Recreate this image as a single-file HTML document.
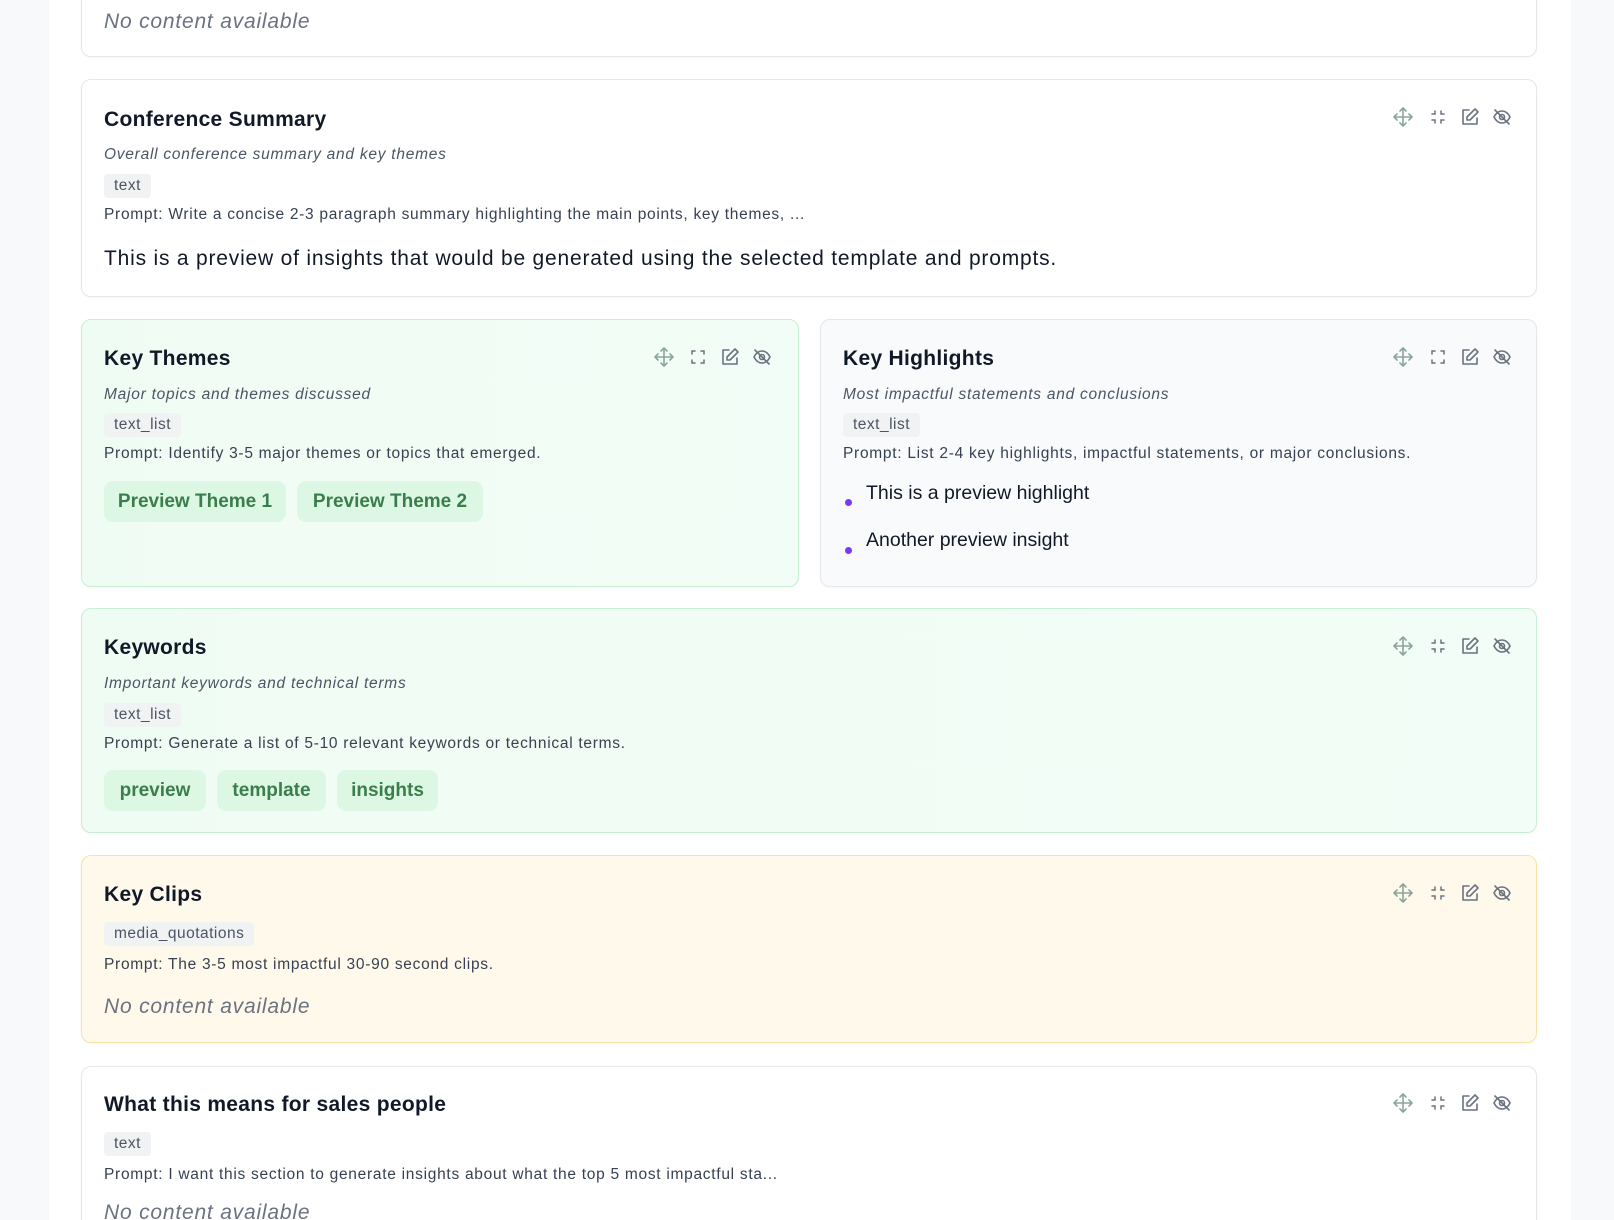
<!DOCTYPE html>
<html><head><meta charset="utf-8"><style>
*{margin:0;padding:0;box-sizing:border-box}
html,body{width:1614px;height:1220px;overflow:hidden}
body{background:#f8f9fb;font-family:"Liberation Sans",Arial,sans-serif;position:relative}
#w{position:absolute;left:0;top:0;width:1614px;height:1220px;overflow:hidden}
.main{position:absolute;left:49px;top:0;width:1522px;height:1220px;background:#fff}
.card{position:absolute;border:1px solid #e5e7eb;border-radius:10px;background:#fff;box-shadow:0 1px 2px rgba(0,0,0,.04)}
.g{background:linear-gradient(90deg,#effcf3,#f3fdf7);border-color:#c6efd4}
.s{background:#f8fafc}
.y{background:#fff9ec;border-color:#f8e3a6}
.t{position:absolute;white-space:nowrap;line-height:24px}
.h,.sub,.pr,.pv,.nc,.tag{transform:translateY(2px)}
.h{font-size:21px;font-weight:bold;color:#111827;letter-spacing:0.3px}
.sub{font-size:15.5px;font-style:italic;color:#4b5563;letter-spacing:0.75px}
.tag{position:absolute;height:24px;line-height:24px;padding:0 10px;background:#f1f2f4;border-radius:4px;font-size:15.5px;color:#4b5563;letter-spacing:0.5px}
.pr{font-size:15.5px;color:#374151;letter-spacing:0.72px}
.nc{font-size:21px;font-style:italic;color:#6b7280;letter-spacing:0.8px}
.pv{font-size:21px;color:#111827;letter-spacing:0.8px}
.chip{position:absolute;height:41px;line-height:41px;border-radius:9px;background:#dcf8e5;color:#3b7d4b;font-size:19px;font-weight:bold;text-align:center}
.ic{position:absolute;width:20px;height:20px}
</style></head><body><div id="w">
<div class="main"></div>

<svg width="0" height="0" style="position:absolute"><defs>
<g id="mv" fill="none" stroke="#8aa69d" stroke-width="1.6" stroke-linecap="round" stroke-linejoin="round"><path d="M10 1v18M1 10h18M7 4l3-3 3 3M7 16l3 3 3-3M4 7l-3 3 3 3M16 7l3 3-3 3"/></g>
<g id="mn" fill="none" stroke="#6b7280" stroke-width="1.5" stroke-linecap="round"><path d="M7 4v3H4M13 4v3h3M7 16v-3H4M13 16v-3h3"/></g>
<g id="mx" fill="none" stroke="#6b7280" stroke-width="1.5" stroke-linecap="round"><path d="M4 7V4h3M16 7V4h-3M4 13v3h3M16 13v3h-3"/></g>
<g id="ed" fill="none" stroke="#6b7280" stroke-width="1.6" stroke-linecap="round" stroke-linejoin="round"><path d="M9 3H3v14h14v-6"/><path d="M15 2l3 3-8 8H7v-3z"/></g>
<g id="ey" fill="none" stroke="#6b7280" stroke-width="1.6" stroke-linecap="round"><path d="M2 10c2-4 5-6 8-6s6 2 8 6c-2 4-5 6-8 6s-6-2-8-6z"/><circle cx="10" cy="10" r="2.5"/><path d="M3 3l14 14"/></g>
</defs></svg>

<div class="card" style="left:81px;top:-20px;width:1456px;height:77px"></div>
<div class="t nc" style="left:104px;top:8px">No content available</div>

<div class="card" style="left:81px;top:79px;width:1456px;height:218px"></div>
<div class="t h" style="left:104px;top:106px">Conference Summary</div>
<div class="t sub" style="left:104px;top:141px">Overall conference summary and key themes</div>
<div class="tag" style="left:104px;top:172px">text</div>
<div class="t pr" style="left:104px;top:201px">Prompt: Write a concise 2-3 paragraph summary highlighting the main points, key themes, ...</div>
<div class="t pv" style="left:104px;top:245px">This is a preview of insights that would be generated using the selected template and prompts.</div>
<svg class="ic" style="left:1393px;top:107px"><use href="#mv"/></svg>
<svg class="ic" style="left:1428px;top:107px"><use href="#mn"/></svg>
<svg class="ic" style="left:1460px;top:107px"><use href="#ed"/></svg>
<svg class="ic" style="left:1492px;top:107px"><use href="#ey"/></svg>

<div class="card g" style="left:81px;top:319px;width:718px;height:268px"></div>
<div class="t h" style="left:104px;top:345px">Key Themes</div>
<div class="t sub" style="left:104px;top:381px">Major topics and themes discussed</div>
<div class="tag" style="left:104px;top:411px">text_list</div>
<div class="t pr" style="left:104px;top:440px">Prompt: Identify 3-5 major themes or topics that emerged.</div>
<div class="chip" style="left:104px;top:481px;width:182px">Preview Theme 1</div>
<div class="chip" style="left:297px;top:481px;width:186px">Preview Theme 2</div>
<svg class="ic" style="left:654px;top:347px"><use href="#mv"/></svg>
<svg class="ic" style="left:688px;top:347px"><use href="#mx"/></svg>
<svg class="ic" style="left:720px;top:347px"><use href="#ed"/></svg>
<svg class="ic" style="left:752px;top:347px"><use href="#ey"/></svg>

<div class="card s" style="left:820px;top:319px;width:717px;height:268px"></div>
<div class="t h" style="left:843px;top:345px">Key Highlights</div>
<div class="t sub" style="left:843px;top:381px">Most impactful statements and conclusions</div>
<div class="tag" style="left:843px;top:411px">text_list</div>
<div class="t pr" style="left:843px;top:440px">Prompt: List 2-4 key highlights, impactful statements, or major conclusions.</div>
<div style="position:absolute;left:845px;top:499px;width:7px;height:7px;border-radius:50%;background:#7c3aed"></div>
<div class="t" style="left:866px;top:481px;font-size:19.5px;color:#111827">This is a preview highlight</div>
<div style="position:absolute;left:845px;top:547px;width:7px;height:7px;border-radius:50%;background:#7c3aed"></div>
<div class="t" style="left:866px;top:528px;font-size:19.5px;color:#111827">Another preview insight</div>
<svg class="ic" style="left:1393px;top:347px"><use href="#mv"/></svg>
<svg class="ic" style="left:1428px;top:347px"><use href="#mx"/></svg>
<svg class="ic" style="left:1460px;top:347px"><use href="#ed"/></svg>
<svg class="ic" style="left:1492px;top:347px"><use href="#ey"/></svg>

<div class="card g" style="left:81px;top:608px;width:1456px;height:225px"></div>
<div class="t h" style="left:104px;top:634px">Keywords</div>
<div class="t sub" style="left:104px;top:670px">Important keywords and technical terms</div>
<div class="tag" style="left:104px;top:701px">text_list</div>
<div class="t pr" style="left:104px;top:730px">Prompt: Generate a list of 5-10 relevant keywords or technical terms.</div>
<div class="chip" style="left:104px;top:770px;width:102px">preview</div>
<div class="chip" style="left:217px;top:770px;width:109px">template</div>
<div class="chip" style="left:337px;top:770px;width:101px">insights</div>
<svg class="ic" style="left:1393px;top:636px"><use href="#mv"/></svg>
<svg class="ic" style="left:1428px;top:636px"><use href="#mn"/></svg>
<svg class="ic" style="left:1460px;top:636px"><use href="#ed"/></svg>
<svg class="ic" style="left:1492px;top:636px"><use href="#ey"/></svg>

<div class="card y" style="left:81px;top:855px;width:1456px;height:188px"></div>
<div class="t h" style="left:104px;top:881px">Key Clips</div>
<div class="tag" style="left:104px;top:920px">media_quotations</div>
<div class="t pr" style="left:104px;top:951px">Prompt: The 3-5 most impactful 30-90 second clips.</div>
<div class="t nc" style="left:104px;top:993px">No content available</div>
<svg class="ic" style="left:1393px;top:883px"><use href="#mv"/></svg>
<svg class="ic" style="left:1428px;top:883px"><use href="#mn"/></svg>
<svg class="ic" style="left:1460px;top:883px"><use href="#ed"/></svg>
<svg class="ic" style="left:1492px;top:883px"><use href="#ey"/></svg>

<div class="card" style="left:81px;top:1066px;width:1456px;height:200px"></div>
<div class="t h" style="left:104px;top:1091px">What this means for sales people</div>
<div class="tag" style="left:104px;top:1130px">text</div>
<div class="t pr" style="left:104px;top:1161px">Prompt: I want this section to generate insights about what the top 5 most impactful sta...</div>
<div class="t nc" style="left:104px;top:1199px">No content available</div>
<svg class="ic" style="left:1393px;top:1093px"><use href="#mv"/></svg>
<svg class="ic" style="left:1428px;top:1093px"><use href="#mn"/></svg>
<svg class="ic" style="left:1460px;top:1093px"><use href="#ed"/></svg>
<svg class="ic" style="left:1492px;top:1093px"><use href="#ey"/></svg>
</div></body></html>
